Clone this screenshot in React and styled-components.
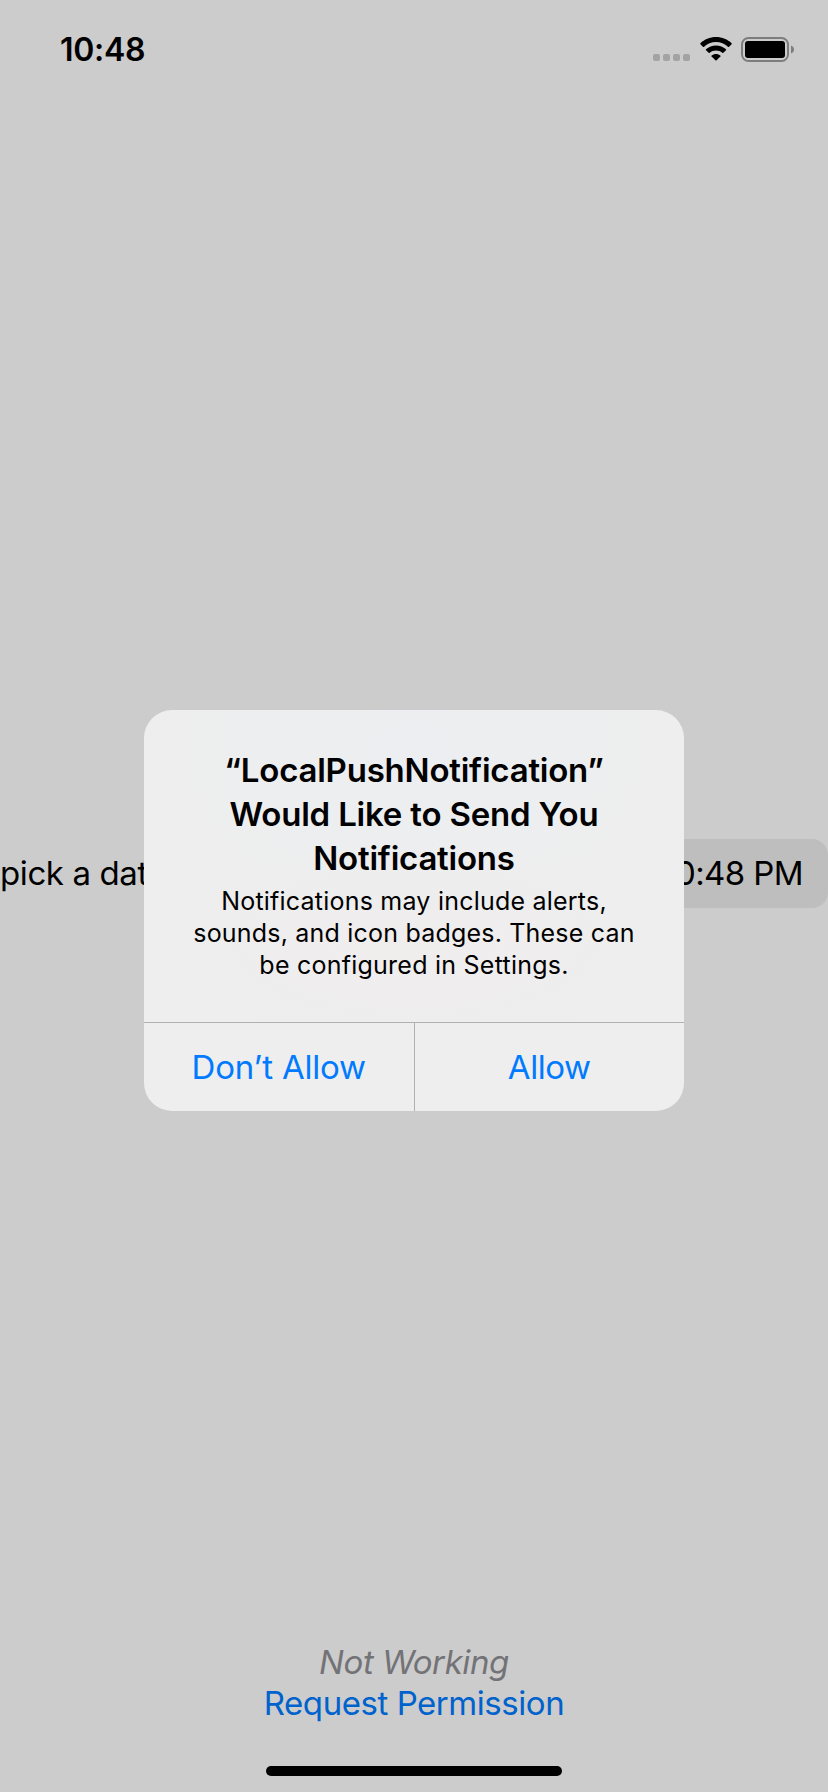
import React from "react";
import styled, { createGlobalStyle } from "styled-components";

const GlobalStyle = createGlobalStyle`
  *, *::before, *::after { box-sizing: border-box; }
  html, body { margin: 0; padding: 0; background: #cccccc; }
  body { font-family: Inter, "Liberation Sans", sans-serif; color: #000; }
`;

const Screen = styled.div`
  position: relative;
  display: flex;
  flex-direction: column;
  width: 828px;
  height: 1792px;
  overflow: hidden;
  background: #cccccc;
`;

const StatusBar = styled.header`
  display: flex;
  flex: none;
  justify-content: space-between;
  height: 88px;
  padding: 30px 34px 0 60px;
`;

const Clock = styled.time`
  font-size: 32px;
  font-weight: 580;
  line-height: 39px;
  letter-spacing: -0.3px;
`;

const StatusIcons = styled.div`
  display: flex;
  align-items: flex-start;
  gap: 9px;
  padding-top: 7px;
`;

const Dots = styled.div`
  display: flex;
  gap: 3px;
  padding: 17px 1px 0 0;
`;

const Dot = styled.span`
  width: 7px;
  height: 7px;
  border-radius: 2px;
  background: #a3a3a3;
`;

const Main = styled.main`
  display: flex;
  flex: 1;
  flex-direction: column;
  padding-top: 751px;
`;

const PickerRow = styled.div`
  display: flex;
  align-items: center;
  justify-content: space-between;
  height: 69px;
`;

const Label = styled.span`
  font-size: 33px;
  line-height: 69px;
  letter-spacing: ${(p) => p.$tracking}px;
  white-space: nowrap;
`;

const TimePill = styled.div`
  height: 69px;
  padding: 0 25px 0 24px;
  border-radius: 16px;
  background: #bebebe;
`;

const Footer = styled.footer`
  display: flex;
  flex: none;
  flex-direction: column;
  align-items: center;
  height: 151px;
  padding-top: 1px;
  font-size: 33px;
  line-height: 41px;
`;

const Status = styled.em`
  color: #737377;
  letter-spacing: -0.4px;
`;

const LinkButton = styled.button`
  padding: 0;
  border: 0;
  background: none;
  color: #0062cc;
  font: inherit;
  letter-spacing: -0.45px;
`;

const HomeIndicator = styled.div`
  width: 296px;
  height: 10px;
  margin-top: 42px;
  border-radius: 5px;
  background: #000;
`;

const Alert = styled.section`
  position: absolute;
  top: 710px;
  left: 144px;
  display: flex;
  flex-direction: column;
  width: 540px;
  height: 401px;
  overflow: hidden;
  border-radius: 28px;
  background:
    radial-gradient(ellipse 260px 190px at 50% 10%, #eceef1, rgba(236, 238, 241, 0)),
    radial-gradient(ellipse 260px 110px at 50% 58%, #f0eded, rgba(240, 237, 237, 0)),
    #eeeeee;
`;

const AlertBody = styled.div`
  flex: 1;
  padding-top: 38px;
  text-align: center;
  white-space: nowrap;
`;

const Title = styled.h1`
  margin: 0;
  font-size: 33px;
  font-weight: 580;
  line-height: 44px;
`;

const Message = styled.p`
  margin: 5px 0 0;
  font-size: 25px;
  line-height: 32px;
`;

const Line = styled.span`
  display: block;
  letter-spacing: ${(p) => p.$tracking}px;
`;

const Actions = styled.div`
  display: flex;
  height: 89px;
  border-top: 1px solid #b0b0b1;
`;

const Action = styled.button`
  flex: 1;
  padding: 0;
  border: 0;
  background: none;
  color: #007aff;
  font: 400 33px/88px Inter, "Liberation Sans", sans-serif;
  letter-spacing: ${(p) => p.$tracking}px;

  & + & { border-left: 1px solid #b0b0b1; }
`;

function WifiIcon() {
  return (
    <svg width="32" height="24" viewBox="0 0 32 24">
      <path d="M16 0C22.1 0 27.7 2.4 31.6 6.2Q32 6.7 31.6 7.2L28.9 9.9Q28.4 10.3 27.9 9.8C24.8 6.9 20.6 5.1 16 5.1S7.2 6.9 4.1 9.8Q3.6 10.3 3.1 9.9L.4 7.2Q0 6.7.4 6.2C4.3 2.4 9.9 0 16 0Z" />
      <path d="M16 8.5C19.8 8.5 23.3 10 26 12.3Q26.4 12.7 26 13.2L23.3 15.8Q22.8 16.2 22.3 15.8C20.6 14.4 18.4 13.5 16 13.5S11.4 14.4 9.7 15.8Q9.2 16.2 8.7 15.8L6 13.2Q5.6 12.7 6 12.3C8.7 10 12.2 8.5 16 8.5Z" />
      <path d="M16 17C17.6 17 19.2 17.6 20.4 18.6Q20.8 19 20.4 19.5L16.6 23.3Q16 23.9 15.4 23.3L11.6 19.5Q11.2 19 11.6 18.6C12.8 17.6 14.4 17 16 17Z" />
    </svg>
  );
}

function BatteryIcon() {
  return (
    <svg width="53" height="25" viewBox="0 0 53 25">
      <rect x="1" y="1" width="46" height="23" rx="6.5" fill="none" stroke="#7d7d7d" strokeWidth="2" />
      <rect x="4" y="4" width="40" height="17" rx="3" />
      <path d="M50 8.5C51.8 9.2 53 10.7 53 12.5S51.8 15.8 50 16.5Z" fill="#7d7d7d" />
    </svg>
  );
}

export default function App() {
  return (
    <>
      <GlobalStyle />
      <Screen>
        <StatusBar>
          <Clock>10:48</Clock>
          <StatusIcons>
            <Dots>
              <Dot />
              <Dot />
              <Dot />
              <Dot />
            </Dots>
            <WifiIcon />
            <BatteryIcon />
          </StatusIcons>
        </StatusBar>
        <Main>
          <PickerRow>
            <Label $tracking={-0.4}>pick a date</Label>
            <TimePill>
              <Label $tracking={-0.6}>10:48 PM</Label>
            </TimePill>
          </PickerRow>
        </Main>
        <Footer>
          <Status>Not Working</Status>
          <LinkButton>Request Permission</LinkButton>
          <HomeIndicator />
        </Footer>
        <Alert role="alertdialog">
          <AlertBody>
            <Title>
              <Line $tracking={-0.22}>“LocalPushNotification”</Line>
              <Line $tracking={-0.2}>Would Like to Send You</Line>
              <Line $tracking={-0.22}>Notifications</Line>
            </Title>
            <Message>
              <Line $tracking={0.22}>Notifications may include alerts,</Line>
              <Line $tracking={0.2}>sounds, and icon badges. These can</Line>
              <Line $tracking={0.24}>be configured in Settings.</Line>
            </Message>
          </AlertBody>
          <Actions>
            <Action $tracking={-0.2}>Don’t Allow</Action>
            <Action $tracking={-0.4}>Allow</Action>
          </Actions>
        </Alert>
      </Screen>
    </>
  );
}
